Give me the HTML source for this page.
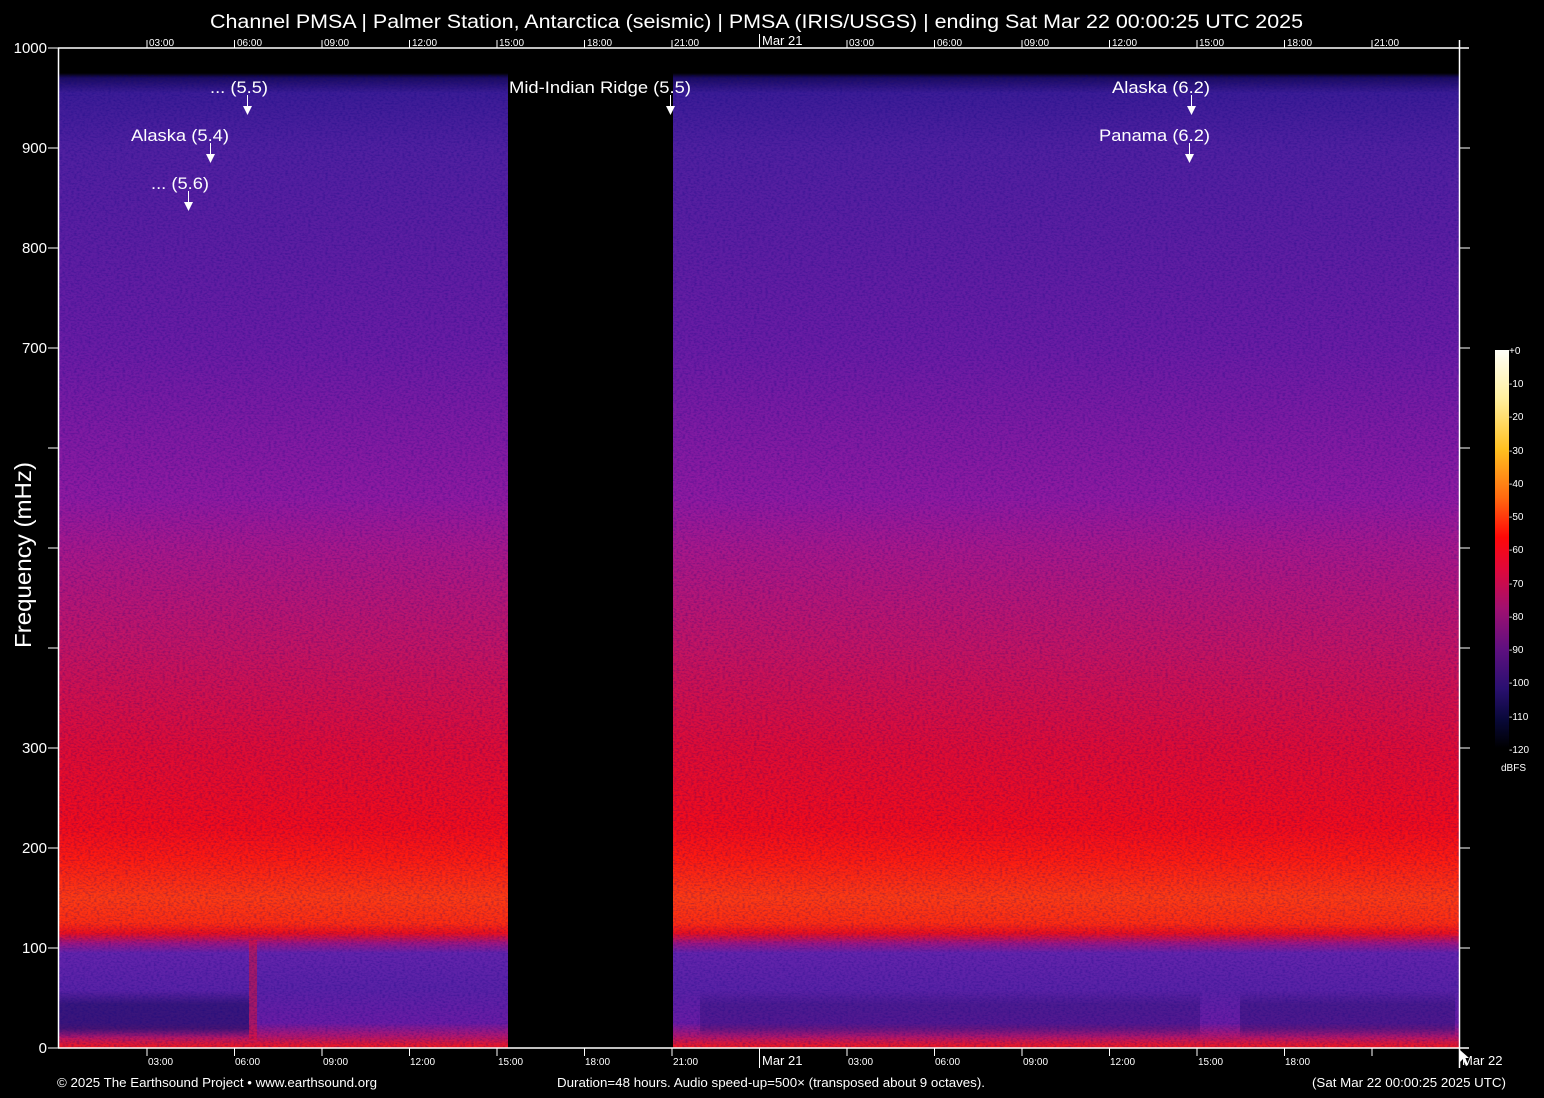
<!DOCTYPE html>
<html><head><meta charset="utf-8"><style>
html,body{margin:0;padding:0;background:#000;width:1544px;height:1098px;overflow:hidden}
svg{display:block}
text{font-family:"Liberation Sans",sans-serif;fill:#fff}
</style></head><body>
<svg width="1544" height="1098" viewBox="0 0 1544 1098" xmlns="http://www.w3.org/2000/svg">
<defs>
<linearGradient id="spec" x1="0" y1="48" x2="0" y2="1048" gradientUnits="userSpaceOnUse">
<stop offset="0" stop-color="#000"/>
<stop offset="0.025" stop-color="#000"/>
<stop offset="0.03" stop-color="#1c0c60"/>
<stop offset="0.045" stop-color="#3c1c96"/>
<stop offset="0.1" stop-color="#5020a0"/>
<stop offset="0.3" stop-color="#6a1ca4"/>
<stop offset="0.45" stop-color="#901aa0"/>
<stop offset="0.5" stop-color="#a8188a"/>
<stop offset="0.6" stop-color="#c41462"/>
<stop offset="0.7" stop-color="#e00c34"/>
<stop offset="0.78" stop-color="#f40c1a"/>
<stop offset="0.81" stop-color="#ff1a10"/>
<stop offset="0.85" stop-color="#ff3a12"/>
<stop offset="0.875" stop-color="#ff2c10"/>
<stop offset="0.885" stop-color="#ec101c"/>
<stop offset="0.895" stop-color="#a01680"/>
<stop offset="0.905" stop-color="#6424ac"/>
<stop offset="0.94" stop-color="#5a22a6"/>
<stop offset="0.975" stop-color="#6a1ca4"/>
<stop offset="0.988" stop-color="#b01670"/>
<stop offset="1" stop-color="#f41818"/>
</linearGradient>
<filter id="noise" x="0" y="0" width="100%" height="100%">
<feTurbulence type="fractalNoise" baseFrequency="0.35 0.6" numOctaves="2" seed="3"/>
<feColorMatrix type="matrix" values="0 0 0 0 0  0 0 0 0 0  0 0 0 0 0.2  -2.2 0 0 0 1.3"/>
</filter>
<linearGradient id="dark" x1="0" y1="0" x2="0" y2="1">
<stop offset="0" stop-color="#1c1060" stop-opacity="0"/>
<stop offset="0.3" stop-color="#1c1060" stop-opacity="0.6"/>
<stop offset="0.8" stop-color="#1c1060" stop-opacity="0.6"/>
<stop offset="1" stop-color="#1c1060" stop-opacity="0"/>
</linearGradient>
<linearGradient id="cbar" x1="0" y1="0" x2="0" y2="1">
<stop offset="0" stop-color="#fffff8"/>
<stop offset="0.12" stop-color="#fff0a0"/>
<stop offset="0.25" stop-color="#ffc020"/>
<stop offset="0.37" stop-color="#ff6a10"/>
<stop offset="0.47" stop-color="#ff0808"/>
<stop offset="0.55" stop-color="#e0083a"/>
<stop offset="0.65" stop-color="#a01070"/>
<stop offset="0.75" stop-color="#601080"/>
<stop offset="0.85" stop-color="#2a1070"/>
<stop offset="0.93" stop-color="#080838"/>
<stop offset="1" stop-color="#000"/>
</linearGradient>
</defs>

<rect x="59" y="49" width="1400" height="999" fill="url(#spec)"/>
<rect x="59" y="990" width="190" height="48" fill="url(#dark)"/>
<rect x="700" y="990" width="500" height="48" fill="url(#dark)" opacity="0.5"/>
<rect x="1240" y="990" width="215" height="48" fill="url(#dark)" opacity="0.6"/>
<rect x="249" y="940" width="8" height="100" fill="#e8102a" opacity="0.5"/>
<rect x="59" y="75" width="1400" height="973" filter="url(#noise)" opacity="0.3"/>
<rect x="508" y="49" width="165" height="999" fill="#000"/>

<g stroke="#fff" stroke-width="1.5" fill="none">
<line x1="58" y1="48" x2="1459" y2="48"/>
<line x1="58" y1="1048" x2="1459" y2="1048"/>
<line x1="58.5" y1="48" x2="58.5" y2="1048"/>
<line x1="1459.5" y1="40" x2="1459.5" y2="1068"/>
<line x1="1459" y1="1048" x2="1469" y2="1048"/>
<line x1="1459" y1="48" x2="1469" y2="48"/>
</g>
<g stroke="#fff" stroke-width="1">
<line x1="48" y1="48" x2="58" y2="48"/><line x1="48" y1="148" x2="58" y2="148"/><line x1="48" y1="248" x2="58" y2="248"/><line x1="48" y1="348" x2="58" y2="348"/><line x1="48" y1="448" x2="58" y2="448"/><line x1="48" y1="548" x2="58" y2="548"/><line x1="48" y1="648" x2="58" y2="648"/><line x1="48" y1="748" x2="58" y2="748"/><line x1="48" y1="848" x2="58" y2="848"/><line x1="48" y1="948" x2="58" y2="948"/><line x1="48" y1="1048" x2="58" y2="1048"/>
<line x1="1460" y1="148" x2="1470" y2="148"/><line x1="1460" y1="248" x2="1470" y2="248"/><line x1="1460" y1="348" x2="1470" y2="348"/><line x1="1460" y1="448" x2="1470" y2="448"/><line x1="1460" y1="548" x2="1470" y2="548"/><line x1="1460" y1="648" x2="1470" y2="648"/><line x1="1460" y1="748" x2="1470" y2="748"/><line x1="1460" y1="848" x2="1470" y2="848"/><line x1="1460" y1="948" x2="1470" y2="948"/>
</g>
<g font-size="15" text-anchor="end">
<text x="47" y="53">1000</text><text x="47" y="153">900</text><text x="47" y="253">800</text><text x="47" y="353">700</text>
<text x="47" y="753">300</text><text x="47" y="853">200</text><text x="47" y="953">100</text><text x="47" y="1053">0</text>
</g>
<text transform="translate(31,555) rotate(-90)" font-size="23" text-anchor="middle" textLength="186" lengthAdjust="spacingAndGlyphs">Frequency (mHz)</text>

<g stroke="#fff" stroke-width="1">
<line x1="147" y1="40" x2="147" y2="48"/><line x1="234.5" y1="40" x2="234.5" y2="48"/><line x1="322" y1="40" x2="322" y2="48"/><line x1="409.5" y1="40" x2="409.5" y2="48"/><line x1="497" y1="40" x2="497" y2="48"/><line x1="584.5" y1="40" x2="584.5" y2="48"/><line x1="672" y1="40" x2="672" y2="48"/><line x1="759.5" y1="34" x2="759.5" y2="48"/><line x1="847" y1="40" x2="847" y2="48"/><line x1="934.5" y1="40" x2="934.5" y2="48"/><line x1="1022" y1="40" x2="1022" y2="48"/><line x1="1109.5" y1="40" x2="1109.5" y2="48"/><line x1="1197" y1="40" x2="1197" y2="48"/><line x1="1284.5" y1="40" x2="1284.5" y2="48"/><line x1="1372" y1="40" x2="1372" y2="48"/>
<line x1="147" y1="1048" x2="147" y2="1056"/><line x1="234.5" y1="1048" x2="234.5" y2="1056"/><line x1="322" y1="1048" x2="322" y2="1056"/><line x1="409.5" y1="1048" x2="409.5" y2="1056"/><line x1="497" y1="1048" x2="497" y2="1056"/><line x1="584.5" y1="1048" x2="584.5" y2="1056"/><line x1="672" y1="1048" x2="672" y2="1056"/><line x1="759.5" y1="1048" x2="759.5" y2="1068"/><line x1="847" y1="1048" x2="847" y2="1056"/><line x1="934.5" y1="1048" x2="934.5" y2="1056"/><line x1="1022" y1="1048" x2="1022" y2="1056"/><line x1="1109.5" y1="1048" x2="1109.5" y2="1056"/><line x1="1197" y1="1048" x2="1197" y2="1056"/><line x1="1284.5" y1="1048" x2="1284.5" y2="1056"/><line x1="1372" y1="1048" x2="1372" y2="1056"/>
</g>
<g font-size="10">
<text x="149" y="46">03:00</text><text x="237" y="46">06:00</text><text x="324" y="46">09:00</text><text x="412" y="46">12:00</text><text x="499" y="46">15:00</text><text x="587" y="46">18:00</text><text x="674" y="46">21:00</text><text x="849" y="46">03:00</text><text x="937" y="46">06:00</text><text x="1024" y="46">09:00</text><text x="1112" y="46">12:00</text><text x="1199" y="46">15:00</text><text x="1287" y="46">18:00</text><text x="1374" y="46">21:00</text>
<text x="148" y="1065">03:00</text><text x="235" y="1065">06:00</text><text x="323" y="1065">09:00</text><text x="410" y="1065">12:00</text><text x="498" y="1065">15:00</text><text x="585" y="1065">18:00</text><text x="673" y="1065">21:00</text><text x="848" y="1065">03:00</text><text x="935" y="1065">06:00</text><text x="1023" y="1065">09:00</text><text x="1110" y="1065">12:00</text><text x="1198" y="1065">15:00</text><text x="1285" y="1065">18:00</text>
</g>
<text x="762" y="45" font-size="13">Mar 21</text>
<text x="762" y="1065" font-size="13">Mar 21</text>
<text x="1462" y="1065" font-size="13">Mar 22</text>
<path d="M1460 1050 L1460 1062 L1463 1059 L1466 1066 L1468 1065 L1465 1058 L1469 1058 Z" fill="#fff"/>

<text x="210" y="28" font-size="19" textLength="1093" lengthAdjust="spacingAndGlyphs">Channel PMSA | Palmer Station, Antarctica (seismic) | PMSA (IRIS/USGS) | ending Sat Mar 22 00:00:25 UTC 2025</text>

<g font-size="17">
<text x="210" y="93" textLength="58" lengthAdjust="spacingAndGlyphs">... (5.5)</text>
<text x="131" y="141" textLength="98" lengthAdjust="spacingAndGlyphs">Alaska (5.4)</text>
<text x="151" y="189" textLength="58" lengthAdjust="spacingAndGlyphs">... (5.6)</text>
<text x="509" y="93" textLength="182" lengthAdjust="spacingAndGlyphs">Mid-Indian Ridge (5.5)</text>
<text x="1112" y="93" textLength="98" lengthAdjust="spacingAndGlyphs">Alaska (6.2)</text>
<text x="1099" y="141" textLength="111" lengthAdjust="spacingAndGlyphs">Panama (6.2)</text>
</g>
<g stroke="#fff" stroke-width="1">
<line x1="247.5" y1="95" x2="247.5" y2="106"/><line x1="210.5" y1="143" x2="210.5" y2="154"/><line x1="188.5" y1="191" x2="188.5" y2="202"/><line x1="670.5" y1="95" x2="670.5" y2="106"/><line x1="1191.5" y1="95" x2="1191.5" y2="106"/><line x1="1189.5" y1="143" x2="1189.5" y2="154"/>
</g>
<g fill="#fff">
<path d="M243 106h9l-4.5 9z"/><path d="M206 154h9l-4.5 9z"/><path d="M184 202h9l-4.5 9z"/><path d="M666 106h9l-4.5 9z"/><path d="M1187 106h9l-4.5 9z"/><path d="M1185 154h9l-4.5 9z"/>
</g>

<rect x="1495" y="350" width="14" height="398" fill="url(#cbar)"/>
<g font-size="10" fill="#ddd">
<text x="1509" y="354">+0</text><text x="1509" y="387">-10</text><text x="1509" y="420">-20</text><text x="1509" y="454">-30</text><text x="1509" y="487">-40</text><text x="1509" y="520">-50</text><text x="1509" y="553">-60</text><text x="1509" y="587">-70</text><text x="1509" y="620">-80</text><text x="1509" y="653">-90</text><text x="1509" y="686">-100</text><text x="1509" y="720">-110</text><text x="1509" y="753">-120</text>
<text x="1501" y="771">dBFS</text>
</g>

<g font-size="13">
<text x="57" y="1087" textLength="320" lengthAdjust="spacingAndGlyphs">© 2025 The Earthsound Project • www.earthsound.org</text>
<text x="557" y="1087" textLength="428" lengthAdjust="spacingAndGlyphs">Duration=48 hours. Audio speed-up=500× (transposed about 9 octaves).</text>
<text x="1312" y="1087" textLength="194" lengthAdjust="spacingAndGlyphs">(Sat Mar 22 00:00:25 2025 UTC)</text>
</g>
</svg>
</body></html>
